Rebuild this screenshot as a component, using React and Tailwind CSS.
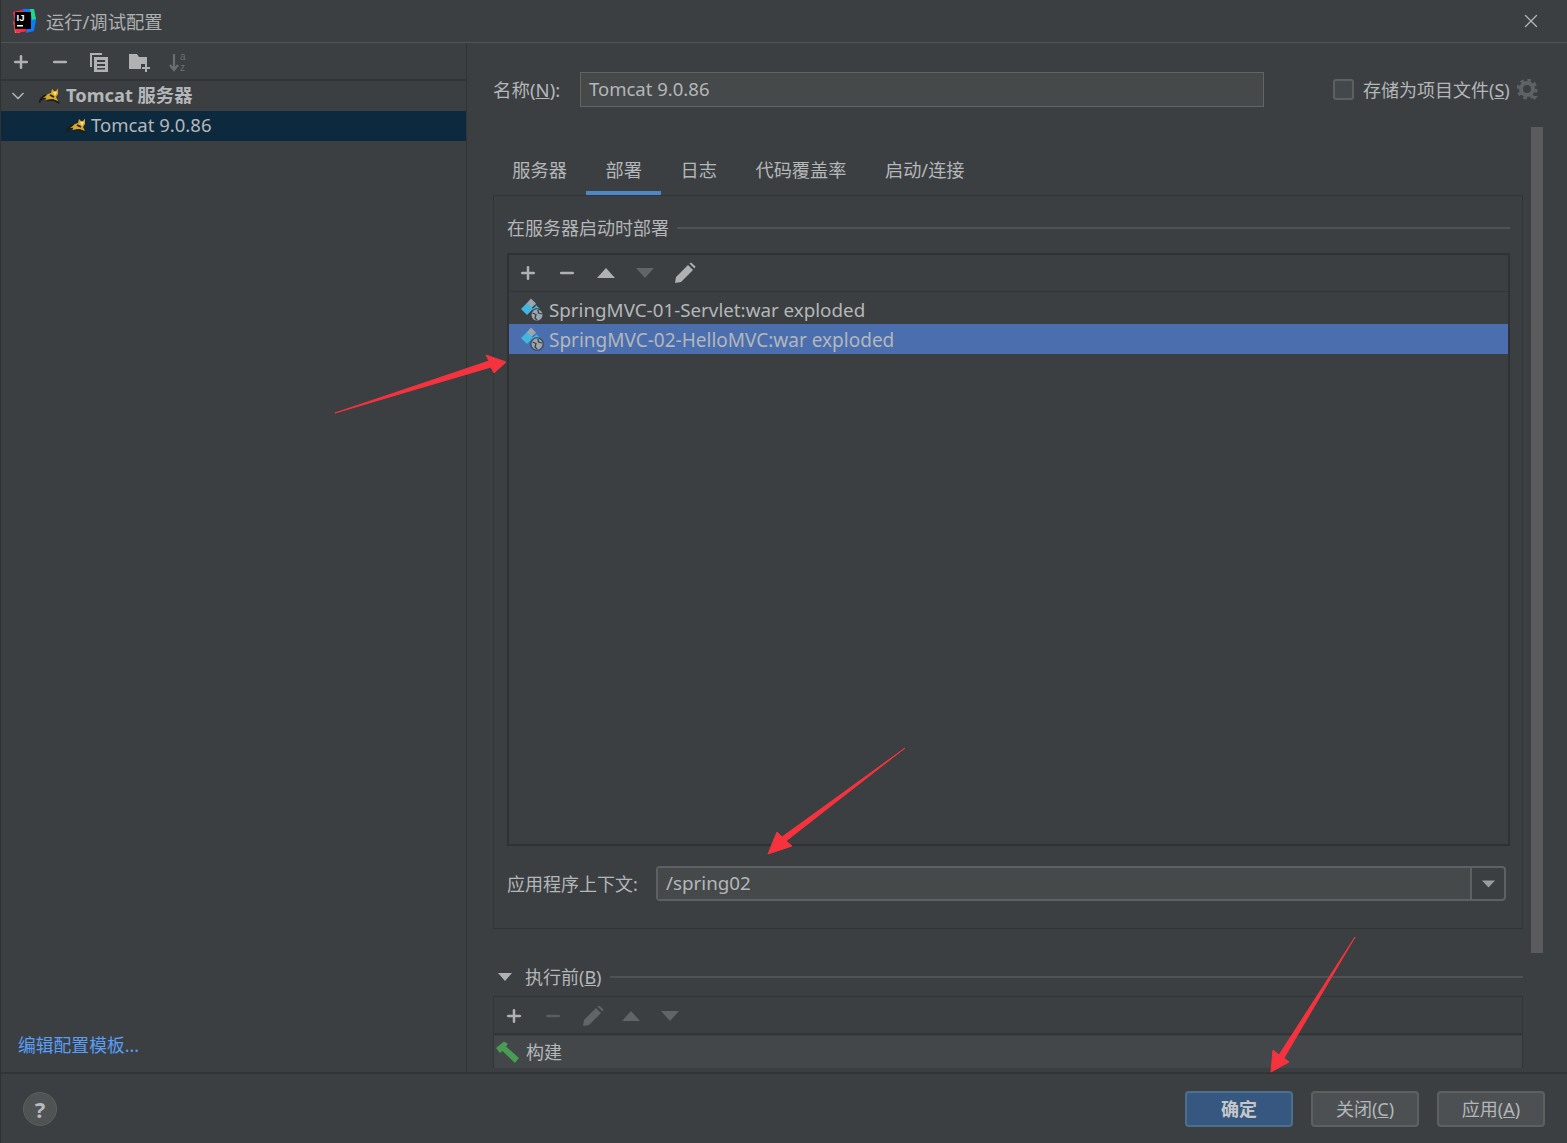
import { Plus, Minus, X, ChevronDown } from 'lucide-react';

const font = { fontFamily: '"Noto Sans", "Noto Sans CJK SC", sans-serif' };

function TriUp({ className }) {
  return <svg className={className} width="18" height="10" viewBox="0 0 18 10"><path d="M9 0 L18 10 L0 10 Z" fill="currentColor" /></svg>;
}

function TriDown({ className }) {
  return <svg className={className} width="18" height="10" viewBox="0 0 18 10"><path d="M0 0 L18 0 L9 10 Z" fill="currentColor" /></svg>;
}

function Pencil({ className }) {
  return (
    <svg className={className} width="22" height="22" viewBox="0 0 22 22">
      <path d="M1 21 L2 15 L14 3 L19 8 L7 20 Z M15.500 1.500 L17 0.500 L21.500 4.500 L20.500 6.500 Z" fill="currentColor" />
    </svg>
  );
}

function TomcatIcon() {
  return (
    <svg width="21" height="16" viewBox="0 0 21 16">
      <path d="M4 10 L9 6 L12 5 L13 1 L15 3 L17 3 L19 0.500 L19 6 L17 9 L19 13 L13 11 L8 12 L5 11 Z" fill="#d9a928" />
      <path d="M14 4 L18 4 L16 8 Z" fill="#f6e08a" />
      <path d="M0.500 15 Q1 9 7 7 M1.500 13 Q3 10 7 10.500 M8 12.500 L14 12 L20.500 15 M11 7 L15 9" stroke="#1f1d17" strokeWidth="1.600" fill="none" />
    </svg>
  );
}

function ArtifactIcon() {
  return (
    <svg width="24" height="24" viewBox="0 0 24 24">
      <path d="M11 0.500 L16 5.500 L11 10.500 L6.500 5.500 Z" fill="#9aa7b0" />
      <path d="M7 5 L13 11 L7 17 L1 11 Z" fill="#40b6e0" />
      <path d="M14 5 L20 11 L14 14 L12 11 L16 8 Z" fill="#40b6e0" />
      <circle cx="17" cy="17" r="7" fill="#3c3f41" fillOpacity="0.700" />
      <circle cx="17" cy="17" r="5.500" fill="#9aa7b0" />
      <path d="M12.500 15 L16 16.500 L15 20 L17 22 M18 12 L18.500 15 L22 16" stroke="#3c3f41" strokeWidth="1.300" fill="none" />
    </svg>
  );
}

function HelpButton() {
  return (
    <div className="w-[34px] h-[34px] rounded-full bg-[#4f5354] border border-[#5b5f60] flex items-center justify-center text-[#b9bcbe] text-[22px] font-bold">?</div>
  );
}

function App() {
  return (
    <div style={font} className="relative w-[1567px] h-[1143px] flex flex-col overflow-hidden bg-[#3c3f41] text-[#b4b7b9] text-[19px] leading-[26px] border-l border-[#2f3133]">
      {/* TITLE */}
      <header className="h-[43px] flex items-center pl-[9px] pr-[25px] border-b border-[#515456] shrink-0">
        <svg width="26" height="26" viewBox="0 0 26 26">
          <path d="M3 4 L12 2 L17 5 L5 14 Z" fill="#fe2857" />
          <path d="M2 5 L5 25 L10 25 L3 12 Z" fill="#fe7c2a" />
          <path d="M12 1 L24 1 L26 12 L24 23 L16 25 L20 10 Z" fill="#087cfa" />
          <path d="M3 14 L6 25 L18 23 L7 16 Z" fill="#fe2857" />
          <path d="M20 1 L24 1 L26 11 L22 12 Z" fill="#21d789" />
          <rect x="5" y="4" width="16" height="17" fill="#000" />
          <text x="6.500" y="13" fill="#fff" fontSize="9.500" fontWeight="700" fontFamily="Liberation Sans">IJ</text>
          <rect x="7" y="17" width="6" height="1.500" fill="#fff" />
        </svg>
        <span className="ml-[10px] pt-[1px] text-[18.3px] text-[#aeb1b3]">运行/调试配置</span>
        <X className="ml-auto text-[#b4b7b9]" size={22} strokeWidth={1.400} />
      </header>

      <div className="flex-1 flex min-h-0">
        {/* LEFT SIDE */}
        <aside className="w-[466px] shrink-0 flex flex-col border-r border-[#323232]">
          <div className="h-[38px] flex items-center gap-[19px] pl-[10px] pt-[1px] border-b-2 border-[#323436] text-[#afb1b3]">
            <Plus size={20} strokeWidth={3} />
            <Minus size={20} strokeWidth={3} />
            <svg width="20" height="20" viewBox="0 0 20 20">
              <path d="M1 1 H13 V3 H3 V15 H1 Z" fill="#afb1b3" />
              <path d="M5 5 H19 V20 H5 Z M8 8 V10 H16 V8 Z M8 12 V14 H16 V12 Z M8 16 V17.500 H16 V16 Z" fill="#afb1b3" fillRule="evenodd" />
            </svg>
            <svg className="ml-[1px]" width="21" height="20" viewBox="0 0 21 20">
              <path d="M0 2 H8 L10 5 H18 V12 H12 V17 H0 Z" fill="#afb1b3" />
              <path d="M13 15 H16 V12 H18 V15 H21 V17 H18 V20 H16 V17 H13 Z" fill="#afb1b3" />
            </svg>
            <svg width="20" height="22" viewBox="0 0 20 22" className="text-[#6b6e70]">
              <path d="M5 3 V18 M1 14 L5 19 L9 14" stroke="currentColor" strokeWidth="2.200" fill="none" />
              <text x="11" y="9" fontSize="10" fill="currentColor" fontFamily="Liberation Sans">a</text>
              <text x="11" y="20" fontSize="10" fill="currentColor" fontFamily="Liberation Sans">z</text>
            </svg>
          </div>
          <div className="h-[30px] flex items-center pl-[7px] font-bold text-[18.3px]">
            <ChevronDown size={20} className="text-[#aeb1b3]" strokeWidth={2} />
            <span className="ml-[11px] flex"><TomcatIcon /></span>
            <span className="ml-[6px] pb-[2px]">Tomcat 服务器</span>
          </div>
          <div className="h-[30px] flex items-center pl-[65px] bg-[#0d293e] text-[18.5px]">
            <TomcatIcon />
            <span className="ml-[4px] pb-[2px]">Tomcat 9.0.86</span>
          </div>
          <a className="mt-auto mb-[14px] ml-[17px] text-[#589df6] text-[17.8px]">编辑配置模板...</a>
        </aside>

        {/* RIGHT SIDE */}
        <main className="relative flex-1 min-w-0 overflow-hidden pl-[26px] pr-[44px]">
          {/* name row */}
          <div className="mt-[29px] h-[35px] flex items-center -mr-[16px]">
            <label className="w-[87px] text-[18.5px]">名称(<span className="underline">N</span>):</label>
            <div className="w-[684px] h-[35px] px-[8px] pb-[1px] flex items-center bg-[#45494a] border border-[#646464] text-[18.5px]">Tomcat 9.0.86</div>
            <span className="ml-[69px] w-[21px] h-[21px] rounded-[3px] bg-[#43494a] border-2 border-[#5e6060]" />
            <span className="ml-[9px] text-[18px]">存储为项目文件(<span className="underline">S</span>)</span>
            <svg className="ml-[7px] text-[#5f6264]" width="22" height="22" viewBox="0 0 22 22">
              <circle cx="10" cy="10" r="6" fill="none" stroke="currentColor" strokeWidth="4" />
              <circle cx="10" cy="10" r="9" fill="none" stroke="currentColor" strokeWidth="3" strokeDasharray="3.500 3.570" />
              <path d="M14 17 H21 L17.500 21 Z" fill="currentColor" />
            </svg>
          </div>

          {/* tabs */}
          <nav className="mt-[43px] h-[45px] flex text-[18.2px]">
            {['服务器', '部署', '日志', '代码覆盖率', '启动/连接'].map((t) => (
              <div key={t} className={`px-[19.3px] flex items-start pt-[7px] ${t === '部署' ? 'border-b-4 border-[#4a88c7]' : ''}`}>{t}</div>
            ))}
          </nav>

          {/* deployment panel */}
          <section className="h-[734px] border border-[#323436] pl-[13px] pr-[12px] flex flex-col">
            <div className="mt-[19px] flex items-center text-[18px]">
              <span>在服务器启动时部署</span>
              <span className="ml-[8px] flex-1 h-[2px] bg-[#505355]" />
            </div>
            <div className="mt-[12px] h-[593px] border-2 border-[#2f3133] flex flex-col">
              <div className="h-[37px] shrink-0 flex items-center pl-[9px] gap-[21px] border-b border-[#323436]">
                <Plus size={20} strokeWidth={3} className="text-[#afb1b3] -mr-[2px]" />
                <Minus size={20} strokeWidth={3} className="text-[#afb1b3] -mr-[2px]" />
                <TriUp className="text-[#afb1b3] ml-[1px]" />
                <TriDown className="text-[#626567]" />
                <Pencil className="text-[#afb1b3] -ml-[1px]" />
              </div>
              <div className="mt-[3px] h-[29px] flex items-center pl-[11px] gap-[5px] text-[18.8px]">
                <ArtifactIcon />
                <span>SpringMVC-01-Servlet:war exploded</span>
              </div>
              <div className="h-[30px] flex items-center pl-[11px] gap-[5px] bg-[#4b6eaf]">
                <ArtifactIcon />
                <span className="pt-[1px]">SpringMVC-02-HelloMVC:war exploded</span>
              </div>
            </div>
            <div className="mt-[20px] h-[35px] flex items-center pr-[4px]">
              <label className="w-[149px] text-[18px]">应用程序上下文:</label>
              <div className="flex-1 h-[35px] flex border-2 border-[#5e6163] rounded-[4px]">
                <div className="flex-1 px-[8px] pb-[1px] flex items-center bg-[#45494a] border-r-2 border-[#5e6163] text-[18.8px]">/spring02</div>
                <div className="w-[32px] flex items-center justify-center">
                  <TriDown className="w-[13px] h-[8px] text-[#9a9d9f]" />
                </div>
              </div>
            </div>
          </section>

          {/* before launch */}
          <div className="mt-[35px] flex items-center text-[18px]">
            <TriDown className="ml-[5px] w-[14px] h-[8px] text-[#afb1b3]" />
            <span className="ml-[13px]">执行前(<span className="underline">B</span>)</span>
            <span className="ml-[8px] flex-1 h-[2px] bg-[#505355]" />
          </div>
          <div className="mt-[6px] border border-[#323436] border-b-0">
            <div className="h-[38px] flex items-center pl-[10px] pt-[1px] gap-[21px] border-b-2 border-[#323436]">
              <Plus size={20} strokeWidth={3} className="text-[#afb1b3] -mr-[2px]" />
              <Minus size={20} strokeWidth={3} className="text-[#5a5d5f] -mr-[2px]" />
              <Pencil className="text-[#626567]" />
              <TriUp className="text-[#626567] -ml-[3px]" />
              <TriDown className="text-[#626567]" />
            </div>
            <div className="h-[32px] mt-[1px] flex items-center pl-[1px] bg-[#43474a] text-[18px]">
              <svg width="24" height="22" viewBox="0 0 24 22">
                <path d="M1 7 L9 0.500 L13 3 L11 5.500 L24 17 L20 22 L7.500 10 L5 12 Z" fill="#499c54" />
              </svg>
              <span className="ml-[7px]">构建</span>
            </div>
          </div>

          {/* scrollbar */}
          <div className="absolute left-[1064px] top-[84px] w-[12px] h-[826px] bg-[#595b5d]" />
        </main>
      </div>

      {/* FOOTER */}
      <footer className="h-[71px] shrink-0 flex items-center pl-[22px] pr-[22px] pt-[1px] border-t-2 border-[#323436] text-[18px]">
        <HelpButton />
        <button className="ml-auto w-[108px] h-[36px] rounded-[4px] bg-[#365880] border-2 border-[#4c708c] font-bold text-[#c4c7c9]">确定</button>
        <button className="ml-[18px] w-[108px] h-[36px] rounded-[4px] bg-[#4c5052] border-2 border-[#5e6060]">关闭(<span className="underline">C</span>)</button>
        <button className="ml-[18px] w-[108px] h-[36px] rounded-[4px] bg-[#4c5052] border-2 border-[#5e6060]">应用(<span className="underline">A</span>)</button>
      </footer>

      {/* annotation arrows */}
      <svg className="absolute left-0 top-0 pointer-events-none" width="1567" height="1143">
        <path d="M334 413 L488 361 L485 355 L505 362 L493 373 L490 367 Z" fill="#f5333f" stroke="#f5333f" strokeWidth="1" />
        <path d="M904 748 L785 841 L791 846 L767 854 L776 832 L781 837 Z" fill="#f5333f" stroke="#f5333f" strokeWidth="1" />
        <path d="M1354 937 L1283 1058 L1288 1062 L1270 1072 L1272 1050 L1278 1055 Z" fill="#f5333f" stroke="#f5333f" strokeWidth="1" />
      </svg>
    </div>
  );
}

export default App;
